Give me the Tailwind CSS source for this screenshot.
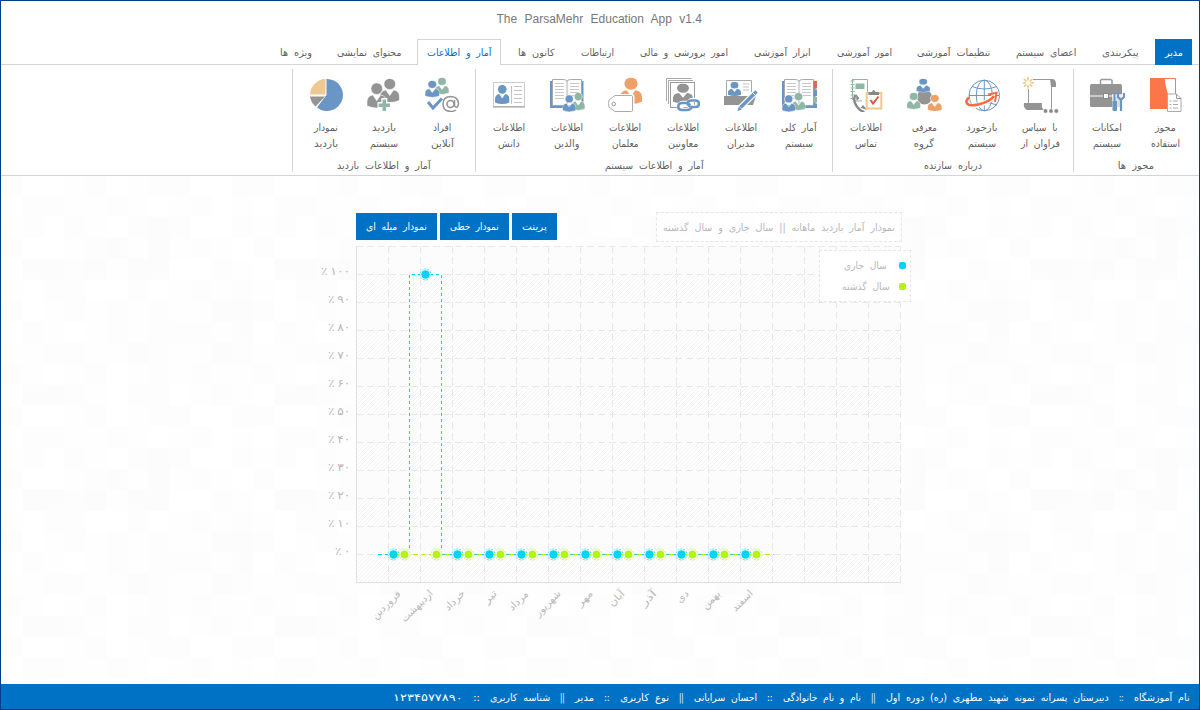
<!DOCTYPE html>
<html lang="fa">
<head>
<meta charset="utf-8">
<title>The ParsaMehr Education App v1.4</title>
<script src="https://cdn.jsdelivr.net/npm/@tailwindcss/browser@4"></script>
</head>
<body class="h-[710px] w-[1200px] overflow-hidden bg-white font-['DejaVu_Sans',sans-serif] text-[10px] text-[#606060]">

<svg width="0" height="0" class="absolute">
  <defs>
    <symbol id="person" viewBox="0 0 20 24" preserveAspectRatio="none">
      <ellipse cx="10" cy="5.5" rx="6" ry="5.6"/>
      <path d="M0 22v-4c0-4 2.500-6 6-6.500l4 5.500 4-5.500c3.500.5 6 2.500 6 6.500v4q-10 4-20 0z"/>
    </symbol>
    <symbol id="book" viewBox="0 0 36 36">
      <path d="M1 5h33.500v27H1z" fill="#6a96c6"/>
      <path d="M3.500 3.500h11q3 0 3.500 2 .5-2 3.500-2h11V29.500H22q-3 0-4 1.500-1-1.500-4-1.500H3.500z" fill="#fff" stroke="#a8a8a8"/>
      <path d="M18 5v25" stroke="#b0b0b0"/>
      <path d="M6 7.500h9M6 10.500h9M6 13.500h9M6 16.500h9M6 19.500h9M6 22.500h9M21 7.500h9M21 10.500h9M21 13.500h9M21 16.500h9M21 19.500h9" stroke="#c8c8c8" fill="none"/>
    </symbol>
  </defs>
</svg>

<div dir="rtl" class="relative isolate flex h-[710px] w-[1200px] flex-col border border-[#003f87]">
  <svg class="absolute inset-0 -z-10 h-full w-full" aria-hidden="true"><defs><pattern id="mosaic" x="0.500" y="173.700" width="252" height="231" patternUnits="userSpaceOnUse"></pattern></defs><rect width="1200" height="710" fill="url(#mosaic)"/></svg>

  <header class="h-[175px] shrink-0 border-b border-[#d4d4d4] bg-white">
    <h1 dir="ltr" class="flex h-[35px] items-center justify-center pr-0.5 font-['Liberation_Sans',sans-serif] text-[12px] text-[#777]"><span data-w="205" data-ws="4">The ParsaMehr Education App v1.4</span></h1>
    <nav class="mt-[3px] flex h-[26px] items-stretch gap-[6px] border-b border-[#d4d4d4] pr-[7px] *:flex *:items-center *:px-[10px] *:pt-[2px]">
      <a class="-mb-px bg-[#0072c6] !pt-px !pr-[9px] text-white"><span data-w="18">مدیر</span></a>
      <a><span data-w="37">پیکربندی</span></a>
      <a><span data-w="60">اعضای سیستم</span></a>
      <a><span data-w="73">تنظیمات آموزشی</span></a>
      <a class="-mr-px"><span data-w="55">امور آموزشی</span></a>
      <a><span data-w="57">ابزار آموزشی</span></a>
      <a><span data-w="88">امور پرورشی و مالی</span></a>
      <a><span data-w="33">ارتباطات</span></a>
      <a><span data-w="37">کانون ها</span></a>
      <a class="-mb-px mr-px border border-b-0 border-[#d4d4d4] bg-white !px-[9px] !pt-0 !pb-px text-[#0072c6]"><span data-w="64">آمار و اطلاعات</span></a>
      <a><span data-w="64">محتوای نمایشی</span></a>
      <a class="-mr-px"><span data-w="32">ویژه ها</span></a>
    </nav>

    <div class="flex pt-[4px] pr-px">
      <section class="h-[103px] border-l border-[#d4d4d4] px-[4px] pt-[7px]">
        <div class="flex">
          <div class="flex w-[58px] flex-col items-center">
            <svg class="size-9" viewBox="0 0 36 36"><path d="M17 2.500h11.500V18" fill="none" stroke="#fd764a"/><path d="M3 2h14.500q1.500 11 4 17v14H3z" fill="#fd764a"/><path d="M18 3q1 12 6 15h4V8q-5-1-10-5" fill="#fff"/><path d="M20.500 18h9l4.500 4.500v13H20.500z" fill="#fff" stroke="#aaa"/><path d="M29.500 18v4.500H34" fill="none" stroke="#999"/><path d="M22.500 25h2M26 25h5M22.500 28.500h2M26 28.500h5M22.500 32h2M26 32h5" stroke="#aaa"/></svg>
            <div class="mt-[8px] flex flex-col items-center leading-4"><span data-w="21">مجوز</span><span data-w="29">استفاده</span></div>
          </div>
          <div class="flex w-[58px] flex-col items-center">
            <svg class="size-9" viewBox="0 0 36 36"><path d="M11.500 8V4.500l1-1h9l1.500 1V8" fill="none" stroke="#999" stroke-width="1.500"/><rect x="1" y="8" width="32" height="23" rx="1.500" fill="#949494"/><path d="M1 20h32" stroke="#fff"/><rect x="14.500" y="17.500" width="5" height="5" fill="#fff" stroke="#888"/><path d="M23 18h12v18H23z" fill="#fff" fill-opacity=".7"/><path d="M25.500 17v9" stroke="#6a96c6" stroke-width="2"/><path d="M23.500 25h4.500v9.500q-2 1-4.500 0z" fill="#6a96c6"/><path d="M29 17v4l3 3 3-3v-4M32 23v12" fill="none" stroke="#6a96c6" stroke-width="2.200"/></svg>
            <div class="mt-[8px] flex flex-col items-center leading-4"><span data-w="30">امکانات</span><span data-w="28">سیستم</span></div>
          </div>
        </div>
        <div class="mt-[6px] flex h-[14px] items-center justify-center"><span data-w="36">مجوز ها</span></div>
      </section>

      <section class="h-[103px] border-l border-[#d4d4d4] px-[4px] pt-[7px]">
        <div class="flex">
          <div class="flex w-[58px] flex-col items-center">
            <svg class="size-9 overflow-visible" viewBox="0 0 36 36"><path d="M6.500 13v14M11 3.500h20M29.500 5v28" fill="none" stroke="#999"/><path d="M28 3h3q3 1 3 5v3h-5z" fill="#949494"/><path d="M2 27h18q-1 5 2 7H5q-4-2-3-7" fill="#949494"/><path d="M6 1v3.500M6 9v3.500M.5 6.800H4M8.500 6.800h3.500M2 3l2.500 2.500M7.800 8.200l2.500 2.500M2 10.700l2.500-2.500M7.800 5.500L10.300 3" stroke="#efc987" stroke-width="1.600"/><g fill="#888" stroke="#fff" stroke-width=".5"><circle cx="23.500" cy="35" r="2.200"/><circle cx="29" cy="35" r="2.200"/><circle cx="34.300" cy="35" r="2.200"/></g></svg>
            <div class="mt-[8px] flex flex-col items-center leading-4"><span data-w="36">با سپاس</span><span data-w="39">فراوان از</span></div>
          </div>
          <div class="flex w-[58px] flex-col items-center">
            <svg class="size-9" viewBox="0 0 36 36"><g fill="none" stroke="#6a96c6"><circle cx="20.300" cy="19.500" r="15.300"/><ellipse cx="20.300" cy="19.500" rx="8" ry="15.300"/><path d="M20.300 4v31M5 19.500h30M8 10.500q12 5 25 0M8 29q12-5 25 0"/></g><path d="M4 22C-1 28 5 32 14 29 22 27 28 24 31 19" fill="none" stroke="#fff" stroke-width="5"/><path d="M5 21.500C-1 27 4 31 14 28.500 22 27 27 24 30 20" fill="none" stroke="#fd6a3b" stroke-width="2.600"/><path d="M24 18.500l8.500-1.700-1.500 9" fill="none" stroke="#fd6a3b" stroke-width="2"/></svg>
            <div class="mt-[8px] flex flex-col items-center leading-4"><span data-w="31">بازخورد</span><span data-w="28">سیستم</span></div>
          </div>
          <div class="flex w-[58px] flex-col items-center">
            <svg class="size-9" viewBox="0 0 36 36"><circle cx="18.500" cy="21" r="7.500" fill="#949494"/><g stroke="#fff" stroke-width=".8"><use href="#person" x="10.200" y="2.500" width="14" height="14" fill="#6a96c6"/><use href="#person" x=".7" y="16.500" width="14" height="17" fill="#8fb7a5"/><use href="#person" x="21.500" y="18.500" width="14.500" height="17" fill="#eda068"/></g></svg>
            <div class="mt-[8px] flex flex-col items-center leading-4"><span data-w="25">معرفی</span><span data-w="20">گروه</span></div>
          </div>
          <div class="flex w-[58px] flex-col items-center">
            <svg class="size-9" viewBox="0 0 36 36"><path d="M4 3.500h15.500V16M5 25h9M4.500 4v20" fill="none" stroke="#8fb7a5"/><path d="M2.500 5h4M2.500 8.500h4M2.500 12h4M2.500 15.500h4M2.500 19h4M2.500 22.500h4" stroke="#8fb7a5" stroke-dasharray="1.500 1"/><path d="M7.500 7.500h9v5.500h-9z" fill="#8fb7a5"/><path d="M7.500 19q-3 5 1 11 4 6 8 5.500" fill="none" stroke="#888" stroke-width="2.300"/><path d="M8 18.500l3 4-2.500 1.500M13 32l2-2.500 3 4" fill="#888" stroke="#888"/><rect x="18.700" y="17" width="14.600" height="15.500" fill="#fff" stroke="#efc987" stroke-width="2"/><path d="M20.500 19v-3h3.500q1.500-4 3.500 0H31v3z" fill="#888"/><path d="M22.500 24l2.500 3.500 5.500-7" fill="none" stroke="#dd5b3c" stroke-width="2"/></svg>
            <div class="mt-[8px] flex flex-col items-center leading-4"><span data-w="32">اطلاعات</span><span data-w="22">تماس</span></div>
          </div>
        </div>
        <div class="mt-[6px] flex h-[14px] items-center justify-center"><span data-w="58">درباره سازنده</span></div>
      </section>

      <section class="h-[103px] border-l border-[#d4d4d4] px-[4px] pt-[7px]">
        <div class="flex">
          <div class="flex w-[58px] flex-col items-center">
            <svg class="size-9" viewBox="0 0 36 36"><use href="#book" width="36" height="36"/><path d="M32.500 5H36v7.500h-3.500z" fill="#dd6a4c"/><path d="M32.500 13.500H36v6.500h-3.500zM32.500 27.500H36V32h-3.500z" fill="#6a96c6"/><path d="M32.500 21H36v5.500h-3.500z" fill="#8fb7a5"/><g stroke="#fff" stroke-width=".8"><use href="#person" x="10.500" y="16.500" width="14" height="18" fill="#8fb7a5"/><use href="#person" x="1" y="19" width="13.500" height="17" fill="#6a96c6"/></g></svg>
            <div class="mt-[8px] flex flex-col items-center leading-4"><span data-w="36">آمار کلی</span><span data-w="28">سیستم</span></div>
          </div>
          <div class="flex w-[58px] flex-col items-center">
            <svg class="size-9" viewBox="0 0 36 36"><path d="M3.500 20V4.500h25V20" fill="#fff" stroke="#aaa"/><use href="#person" x="5" y="6" width="13" height="14" fill="#6a96c6"/><path d="M20 8h6M20 11h6M20 14h6" stroke="#c4c4c4"/><path d="M1 20h32l-3 9H1z" fill="#949494"/><path d="M33.500 15.500L15.500 33.500" stroke="#fff" stroke-width="6"/><path d="M33.500 15.500l-16 16" stroke="#6a96c6" stroke-width="3.500"/><path d="M15.800 30.500l3 3-4.500 1.500z" fill="#6a96c6"/><path d="M29.500 16.500l3 3" stroke="#fff"/></svg>
            <div class="mt-[8px] flex flex-col items-center leading-4"><span data-w="32">اطلاعات</span><span data-w="28">مدیران</span></div>
          </div>
          <div class="flex w-[58px] flex-col items-center">
            <svg class="size-9" viewBox="0 0 36 36"><path d="M1.500 25V2.500h25M3.500 28V4.500H28" fill="none" stroke="#aaa"/><rect x="5.500" y="6.500" width="24" height="25" fill="#fff" stroke="#999"/><use href="#person" x="8" y="7.500" width="20" height="20" fill="#949494"/><g fill="none"><path d="M20 34c-7 0-8-7-2-7h5c5 0 4 7-1 7zM26 31c-4-2-2-7 2-7h3c5 0 5 7 0 7h-5" stroke="#fff" stroke-width="4.500"/><path d="M25 29.500c-1-2-2-2.500-4-2.500h-4c-5 0-5 7 0 7h5c3 0 4-1 5-3M22.500 28c1 2 2 3 4.500 3h3.500c4.500 0 4.500-6.500 0-6.500H26c-2.500 0-3 1-3.500 3" stroke="#6a96c6" stroke-width="2.500"/></g></svg>
            <div class="mt-[8px] flex flex-col items-center leading-4"><span data-w="32">اطلاعات</span><span data-w="30">معاونین</span></div>
          </div>
          <div class="flex w-[58px] flex-col items-center">
            <svg class="size-9" viewBox="0 0 36 36"><use href="#person" x="13" y="1.500" width="22" height="26.500" fill="#eda068"/><path d="M8 19.500h17q1 0 1 1v14q0 1-1 1H8l-6-5q-1-3 0-6z" fill="#fff" stroke="#fff" stroke-width="3"/><path d="M8 19.500h16.500q1 0 1 1v13.500q0 1.500-1 1.500H8L2 31q-1-3.500 0-7z" fill="#fff" stroke="#aaa"/><circle cx="6.700" cy="28" r="1.800" fill="none" stroke="#999"/></svg>
            <div class="mt-[8px] flex flex-col items-center leading-4"><span data-w="32">اطلاعات</span><span data-w="27">معلمان</span></div>
          </div>
          <div class="flex w-[58px] flex-col items-center">
            <svg class="size-9" viewBox="0 0 36 36"><use href="#book" width="36" height="36"/><g stroke="#fff" stroke-width=".8"><use href="#person" x="22.500" y="16.500" width="13.500" height="18" fill="#8fb7a5"/><use href="#person" x="13.500" y="19" width="13.500" height="17" fill="#6a96c6"/></g></svg>
            <div class="mt-[8px] flex flex-col items-center leading-4"><span data-w="32">اطلاعات</span><span data-w="25">والدین</span></div>
          </div>
          <div class="flex w-[58px] flex-col items-center">
            <svg class="size-9" viewBox="0 0 36 36"><path d="M2.500 6.500h31v24h-31z" fill="#fff" stroke="#ccc"/><path d="M2 31h32" stroke="#999"/><use href="#person" x="4" y="9" width="14.500" height="19" fill="#6a96c6"/><path d="M20.500 10v18M23 10.500h8M23 14.500h8M23 18.500h8M23 22.500h8M23 26.500h8" stroke="#c4c4c4"/></svg>
            <div class="mt-[8px] flex flex-col items-center leading-4"><span data-w="32">اطلاعات</span><span data-w="22">دانش</span></div>
          </div>
        </div>
        <div class="mt-[6px] flex h-[14px] items-center justify-center"><span data-w="99">آمار و اطلاعات سیستم</span></div>
      </section>

      <section class="h-[103px] border-l border-[#d4d4d4] px-[4px] pt-[7px]">
        <div class="flex">
          <div class="flex w-[58px] flex-col items-center">
            <svg class="size-9" viewBox="0 0 36 36"><g stroke="#fff" stroke-width=".7"><use href="#person" x="11" y="1.500" width="14" height="17" fill="#8fb7a5"/><use href="#person" x="1" y="4.500" width="14.500" height="17" fill="#6a96c6"/></g><path d="M4 26l5 6 9-9.500" fill="none" stroke="#6a96c6" stroke-width="3"/><circle cx="26.500" cy="28" r="3.500" fill="none" stroke="#949494" stroke-width="1.600"/><path d="M30.500 24v6q3 3 4-2 0-7-7.500-7.500-8 0-8 7.500t8 7.500q3 0 5-1.500" fill="none" stroke="#949494" stroke-width="1.500"/></svg>
            <div class="mt-[8px] flex flex-col items-center leading-4"><span data-w="18">افراد</span><span data-w="23">آنلاین</span></div>
          </div>
          <div class="flex w-[58px] flex-col items-center">
            <svg class="size-9" viewBox="0 0 36 36"><g fill="#949494" stroke="#fff" stroke-width=".6"><use href="#person" x="14" y="2.500" width="19.500" height="24"/><use href="#person" x="1" y="7" width="19.500" height="25"/></g><path d="M18.300 22v14M11.500 29h13.600" stroke="#fff" stroke-width="6"/><path d="M18.300 23.500V35M12.600 29.200H24" stroke="#8fb7a5" stroke-width="3.500"/></svg>
            <div class="mt-[8px] flex flex-col items-center leading-4"><span data-w="24">بازدید</span><span data-w="28">سیستم</span></div>
          </div>
          <div class="flex w-[58px] flex-col items-center">
            <svg class="size-9" viewBox="0 0 36 36"><path d="M18.500 19V3a16 16 0 1 1-9.500 28.500z" fill="#6a96c6"/><path d="M17.500 18.500H2A16 16 0 0 1 17.500 3z" fill="#efc994"/><path d="M17 20.500L7.500 30.500A16 16 0 0 1 2 20.500z" fill="#949494"/></svg>
            <div class="mt-[8px] flex flex-col items-center leading-4"><span data-w="24">نمودار</span><span data-w="24">بازدید</span></div>
          </div>
        </div>
        <div class="mt-[6px] flex h-[14px] items-center justify-center"><span data-w="94">آمار و اطلاعات بازدید</span></div>
      </section>
    </div>
  </header>

  <main class="flex grow flex-col pt-[36px] text-[#b8b8b8]">
    <div class="mr-[297px] flex w-[546px] items-start justify-between">
      <h2 class="flex h-[30px] w-[246px] items-center justify-center border border-dashed border-[#e6e6e6] bg-white/60"><span data-w="232">نمودار آمار بازدید ماهانه || سال جاری و سال گذشته</span></h2>
      <div class="flex gap-[3px] pt-px text-white *:flex *:h-[27px] *:items-center *:justify-center *:bg-[#0072c6]">
        <button class="w-[45px]"><span data-w="25">پرینت</span></button>
        <button class="w-[69px]"><span data-w="49">نمودار خطی</span></button>
        <button class="w-[81px]"><span data-w="61">نمودار میله ای</span></button>
      </div>
    </div>

    <div dir="ltr" class="mt-[4px] flex">
      <div id="levels" class="-mt-px flex w-[349px] flex-col items-end pt-[13px] text-[11px] *:flex *:h-[28px] *:items-center" dir="ltr"></div>
      <div class="relative ml-[6px]">
        <svg id="plot" width="545" height="337" class="block overflow-visible"></svg>
        <div dir="rtl" class="absolute top-[4px] left-[463px] h-[52px] w-[92px] border border-dashed border-[#e6e6e6] bg-white pt-[4px] pr-[4px]">
          <div class="flex h-[21px] items-center"><i class="size-[7px] rounded-[2px] bg-[#0ad1f7]"></i><span class="mr-[12px]" data-w="43">سال جاری</span></div>
          <div class="flex h-[21px] items-center"><i class="size-[7px] rounded-[2px] bg-[#b5f311]"></i><span class="mr-[9px]" data-w="48">سال گذشته</span></div>
        </div>
        <div id="months" class="flex pl-[9px]"></div>
      </div>
    </div>
  </main>

  <footer class="flex h-[25px] shrink-0 items-center gap-[10px] bg-[#0072c6] pt-[2px] pr-[9px] text-white">
    <span data-w="56">نام آموزشگاه</span><span data-w="5">::</span><span data-w="223">دبیرستان پسرانه نمونه شهید مطهری (ره) دوره اول</span><span data-w="5">||</span><span data-w="78">نام و نام خانوادگی</span><span data-w="6">::</span><span data-w="63">احسان سرایانی</span><span data-w="5">||</span><span data-w="49">نوع کاربری</span><span data-w="6">::</span><span data-w="19">مدیر</span><span data-w="5">||</span><span data-w="60">شناسه کاربری</span><span data-w="7">::</span><span data-w="70">۱۲۳۴۵۷۷۸۹۰</span>
  </footer>
</div>

<script>
  // Mosaic backdrop: 12 x 11 cells of 21px, four very light greys.
  const shades = ['#fff', '#fefefe', '#fdfdfd', '#fcfcfc'];
  const rows = ['200120122002','022112101201','120210232002','200123131210','033231330021','102200201212','201212121133','021012122213','112211321132','210120121211','033210220121'];
  document.getElementById('mosaic').innerHTML = rows.map((r, y) => [...r].map((c, x) =>
    `<rect x="${x * 21}" y="${y * 21}" width="21" height="21" fill="${shades[c]}"/>`).join('')).join('');

  // Percentage scale, top to bottom.
  const fa = n => String(n).replace(/\d/g, d => '۰۱۲۳۴۵۶۷۸۹'[d]);
  document.getElementById('levels').innerHTML = [100, 90, 80, 70, 60, 50, 40, 30, 20, 10, 0].map(n =>
    `<div><span dir="rtl" data-ws="-1" data-w="${n === 100 ? 29 : n ? 22 : 15}">${fa(n)} ٪</span></div>`).join('');

  const months = [['فروردین', 36], ['اردیبهشت', 40], ['خرداد', 24], ['تیر', 14], ['مرداد', 24], ['شهریور', 32], ['مهر', 18], ['آبان', 18], ['آذر', 18], ['دی', 13], ['بهمن', 22], ['اسفند', 25]];
  document.getElementById('months').innerHTML = months.map(([m, w]) =>
    `<div class="flex h-[50px] w-[32px] shrink-0 justify-end"><div class="h-[14px] origin-top-right -rotate-45 pr-[5px]"><span dir="rtl" data-w="${w}">${m}</span></div></div>`).join('');

  // Plot area: hatch, dashed grid, both series.
  let s = `<defs><pattern id="h" width="4" height="4" patternUnits="userSpaceOnUse"><path d="M-1 1L1-1M0 4L4 0M3 5L5 3" stroke="#f0f0f0" stroke-width=".8"/></pattern></defs>
    <rect width="545" height="336" fill="#fff" fill-opacity=".6"/><rect width="545" height="336" fill="url(#h)"/>`;
  for (let i = 0; i < 12; i += 2) s += `<rect y="${i * 28}" width="545" height="28" fill="#fbfbfb" fill-opacity=".6"/>`;
  for (let i = 0; i < 12; i++) s += `<path d="M0 ${i * 28 + .5}H545" stroke="#e9e9e9" stroke-dasharray="7 4"/>`;
  for (let i = 1; i < 18; i++) s += `<path d="M${i * 32 + .5} 0V336" stroke="#e9e9e9" stroke-dasharray="7 4"/>`;
  s += `<path d="M.5 0V336.500H545" fill="none" stroke="#e0e0e0"/>`;
  const core = (x, y, c) => `<circle cx="${x}" cy="${y}" r="3.900" fill="${c}"/>`;
  const dot = (x, y, c) => `<circle cx="${x}" cy="${y}" r="5.500" fill="#fff" stroke="${c}" stroke-opacity=".7" stroke-dasharray="2 1"/>` + core(x, y, c);
  const cyan = '#0ad1f7', lime = '#b5f311';
  s += `<path d="M22 308.500H53.500" stroke="${cyan}" stroke-dasharray="4 3"/><path d="M53.500 302V28.500H85.500V302" fill="none" stroke="${cyan}" stroke-dasharray="3 3"/><path d="M86 308.500H390" stroke="${cyan}"/>`;
  for (let i = 0; i < 12; i++) s += dot(37.5 + 32 * i, i === 1 ? 28.5 : 308.5, cyan);
  s += `<path d="M65 28.500H74" stroke="${cyan}"/><path d="M33 308.500H418" stroke="${lime}" stroke-dasharray="5 3"/>`;
  for (let i = 0; i < 12; i++) if (i !== 1) s += core(37.5 + 32 * i, 308.5, cyan);
  for (let i = 0; i < 12; i++) s += dot(48.5 + 32 * i, 308.5, lime);
  // The "1" column starts where its drawn point sits, at the 100% level.
  s += core(69.5, 28.5, cyan);
  document.getElementById('plot').innerHTML = s;

  // Give each label its column width; the glyph run is scaled to fill it,
  // again whenever its natural width changes.
  const fit = new ResizeObserver(entries => {
    for (const { target } of entries) {
      const n = target.offsetWidth;
      if (n) target.style.transform = `scaleX(${target.parentNode.dataset.w / n})`;
    }
  });
  for (const el of document.querySelectorAll('[data-w]')) {
    const inner = document.createElement('span');
    inner.textContent = el.textContent;
    inner.style.cssText = `display:block;width:max-content;white-space:nowrap;word-spacing:${el.dataset.ws || 3}px;transform-origin:${getComputedStyle(el).direction === 'rtl' ? 'right' : 'left'}`;
    el.replaceChildren(inner);
    el.style.cssText = `display:block;flex:none;width:${el.dataset.w}px`;
    fit.observe(inner);
  }
</script>
</body>
</html>
